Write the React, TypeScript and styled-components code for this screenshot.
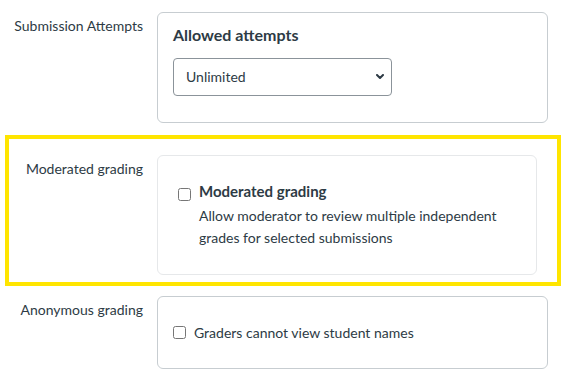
import React from "react";
import styled, { createGlobalStyle } from "styled-components";

const Global = createGlobalStyle`
  html, body { margin: 0; padding: 0; background: #ffffff; }
  body {
    font-family: Lato, "Open Sans", "Liberation Sans", sans-serif;
    color: #2d3b45;
  }
`;

const Page = styled.div`
  display: flex;
  flex-direction: column;
  padding-top: 12px;
`;

const Row = styled.div<{ $label: number; $card: number }>`
  display: grid;
  grid-template-columns: ${(p) => p.$label}px ${(p) => p.$card}px;
  column-gap: 14px;
  align-items: start;
`;

const Label = styled.div`
  text-align: right;
  font-size: 14px;
  line-height: 20px;
  padding-top: 4px;
  color: #2d3b45;
`;

const Highlight = styled.div`
  margin: 12px 0 10px 5px;
  width: 556px;
  box-sizing: border-box;
  border: 4px solid #ffe500;
  padding: 16px 20px 7px 0;
`;

const Card = styled.div<{ $light?: boolean }>`
  box-sizing: border-box;
  border: 1px solid ${(p) => (p.$light ? "#e6e8ea" : "#c7cdd1")};
  border-radius: 6px;
  background: #ffffff;
`;

const AttemptsCard = styled(Card)`
  padding: 10px 15px 26px;
`;

const ModeratedCard = styled(Card)`
  padding: 24px 20px 26px;
`;

const AnonymousCard = styled(Card)`
  padding: 25px 15px;
`;

const Heading = styled.div`
  font-size: 16px;
  line-height: 24px;
  font-weight: 700;
  color: #2d3b45;
  margin-bottom: 11px;
`;

const SelectWrap = styled.div`
  position: relative;
  width: 219px;
  height: 38px;
`;

const Select = styled.select`
  appearance: none;
  -webkit-appearance: none;
  width: 100%;
  height: 100%;
  box-sizing: border-box;
  border: 1px solid #8b939a;
  border-radius: 4px;
  background: #ffffff;
  padding: 0 12px 1px;
  font-family: Lato, "Open Sans", "Liberation Sans", sans-serif;
  font-size: 14px;
  color: #2d3b45;
  outline: none;
`;

const Chevron = styled.svg`
  position: absolute;
  right: 8px;
  top: 16px;
  width: 8px;
  height: 6px;
  pointer-events: none;
`;

const CheckRow = styled.label<{ $center?: boolean }>`
  display: flex;
  align-items: ${(p) => (p.$center ? "center" : "flex-start")};
  gap: 8px;
`;

const Box = styled.input<{ $offset?: number }>`
  margin: ${(p) => p.$offset ?? 0}px 0 0 0;
  width: 13px;
  height: 13px;
  flex: none;
`;

const CheckText = styled.div`
  display: flex;
  flex-direction: column;
`;

const CheckTitle = styled.div`
  font-size: 15px;
  line-height: 23px;
  font-weight: 700;
  color: #2d3b45;
`;

const CheckDesc = styled.div`
  margin-top: 2px;
  font-size: 14px;
  line-height: 21.5px;
  color: #2d3b45;
`;

const CheckPlain = styled.span`
  font-size: 14px;
  line-height: 21px;
  color: #2d3b45;
`;

export default function App() {
  return (
    <>
      <Global />
      <Page>
        <Row $label={143} $card={391}>
          <Label>Submission Attempts</Label>
          <AttemptsCard>
            <Heading>Allowed attempts</Heading>
            <SelectWrap>
              <Select defaultValue="unlimited">
                <option value="unlimited">Unlimited</option>
                <option value="limited">Limited</option>
              </Select>
              <Chevron viewBox="0 0 8 6">
                <polyline
                  points="1,1 4,4 7,1"
                  fill="none"
                  stroke="#2d3b45"
                  strokeWidth="2"
                  strokeLinecap="round"
                  strokeLinejoin="round"
                />
              </Chevron>
            </SelectWrap>
          </AttemptsCard>
        </Row>

        <Highlight>
          <Row $label={134} $card={380}>
            <Label>Moderated grading</Label>
            <ModeratedCard $light>
              <CheckRow>
                <Box type="checkbox" $offset={8} />
                <CheckText>
                  <CheckTitle>Moderated grading</CheckTitle>
                  <CheckDesc>
                    Allow moderator to review multiple independent grades for
                    selected submissions
                  </CheckDesc>
                </CheckText>
              </CheckRow>
            </ModeratedCard>
          </Row>
        </Highlight>

        <Row $label={143} $card={391}>
          <Label>Anonymous grading</Label>
          <AnonymousCard>
            <CheckRow $center>
              <Box type="checkbox" />
              <CheckPlain>Graders cannot view student names</CheckPlain>
            </CheckRow>
          </AnonymousCard>
        </Row>
      </Page>
    </>
  );
}
